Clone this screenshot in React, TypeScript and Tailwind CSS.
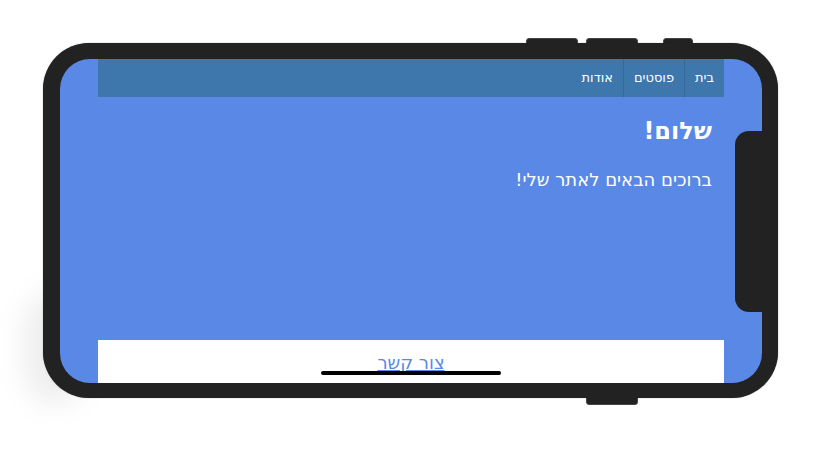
export default function App() {
  const navItems = ['בית', 'פוסטים', 'אודות'];

  return (
    <div className="w-[822px] h-[459px] bg-white pl-[43px] pt-[43px] font-['DejaVu_Sans',sans-serif]">
      <div className="relative w-[735px] h-[355px]">
        {/* soft shadow on the lower left */}
        <div className="absolute left-[-18px] top-[250px] w-[60px] h-[110px] rounded-[40px] bg-black/[0.07] blur-[14px]" />

        {/* side buttons */}
        <div className="absolute left-[483px] top-[-5px] w-[52px] h-[7px] rounded-t-[3px] bg-[#222] border border-[#444]" />
        <div className="absolute left-[543px] top-[-5px] w-[52px] h-[7px] rounded-t-[3px] bg-[#222] border border-[#444]" />
        <div className="absolute left-[620px] top-[-5px] w-[30px] h-[7px] rounded-t-[3px] bg-[#222] border border-[#444]" />
        <div className="absolute left-[543px] top-[353px] w-[52px] h-[9px] rounded-b-[3px] bg-[#222] border border-[#444]" />

        {/* frame */}
        <div className="relative w-full h-full rounded-[46px] bg-[#222] pt-4 pr-4 pl-[17px] pb-[15px] shadow-[0_0_1px_rgba(0,0,0,0.6)]">
          <div
            dir="rtl"
            className="relative w-[702px] h-[324px] rounded-[30px] overflow-hidden bg-[#5a88e6] flex flex-col items-center"
          >
            <nav className="w-[626px] h-[38px] bg-[#3d77ab] flex shrink-0">
              {navItems.map((item, i) => (
                <a
                  key={item}
                  className={`px-[10px] leading-[38px] text-[13px] text-white ${
                    i < navItems.length - 1 ? 'border-l border-[#336a9a]' : ''
                  }`}
                >
                  {item}
                </a>
              ))}
            </nav>

            <main className="w-[626px] flex-1 px-3 text-white">
              <h1 className="mt-[18px] text-2xl leading-8 font-bold">שלום!</h1>
              <p className="mt-[19px] text-lg leading-[27px]">ברוכים הבאים לאתר שלי!</p>
            </main>

            <footer className="w-[626px] h-[43px] shrink-0 bg-white pt-[9px] text-center">
              <a className="text-lg text-[#5a88e6] underline">צור קשר</a>
            </footer>

            {/* notch */}
            <div className="absolute right-0 top-[72px] w-[27px] h-[181px] rounded-l-[14px] bg-[#222]" />

            {/* home indicator */}
            <div className="absolute bottom-[8px] left-[261px] w-[180px] h-[4px] rounded-full bg-black" />
          </div>
        </div>
      </div>
    </div>
  );
}
